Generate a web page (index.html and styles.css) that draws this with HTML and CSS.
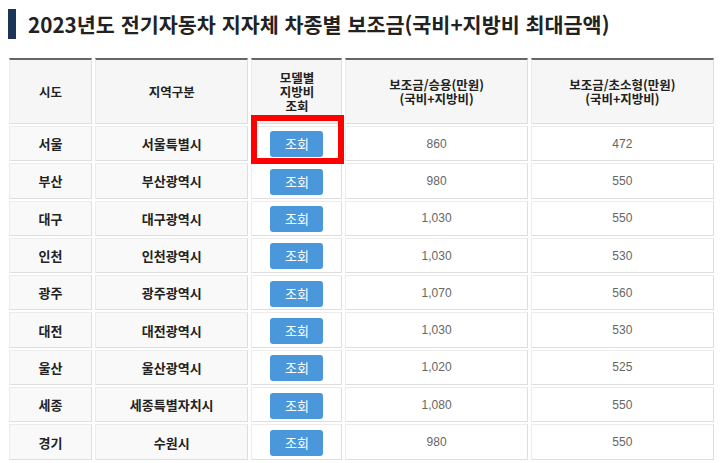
FILE: index.html
```html
<!DOCTYPE html>
<html lang="ko">
<head>
<meta charset="utf-8">
<title>2023년도 전기자동차 지자체 차종별 보조금</title>
<link rel="stylesheet" href="styles.css">
</head>
<body>
<div class="page">
  <h2 class="title"><span class="title-bar"></span><span class="title-text">2023년도 전기자동차 지자체 차종별 보조금(국비+지방비 최대금액)</span></h2>
  <div class="table-wrap">
    <table class="subsidy">
      <colgroup>
        <col class="c-sido">
        <col class="c-region">
        <col class="c-model">
        <col class="c-car">
        <col class="c-small">
      </colgroup>
      <thead>
        <tr>
          <th>시도</th>
          <th>지역구분</th>
          <th>모델별<br>지방비<br>조회</th>
          <th>보조금/승용(만원)<br>(국비+지방비)</th>
          <th>보조금/초소형(만원)<br>(국비+지방비)</th>
        </tr>
      </thead>
      <tbody>
        <tr><td class="name">서울</td><td class="name">서울특별시</td><td class="btn-cell"><button class="btn">조회</button></td><td class="num">860</td><td class="num">472</td></tr>
        <tr><td class="name">부산</td><td class="name">부산광역시</td><td class="btn-cell"><button class="btn">조회</button></td><td class="num">980</td><td class="num">550</td></tr>
        <tr><td class="name">대구</td><td class="name">대구광역시</td><td class="btn-cell"><button class="btn">조회</button></td><td class="num">1,030</td><td class="num">550</td></tr>
        <tr><td class="name">인천</td><td class="name">인천광역시</td><td class="btn-cell"><button class="btn">조회</button></td><td class="num">1,030</td><td class="num">530</td></tr>
        <tr><td class="name">광주</td><td class="name">광주광역시</td><td class="btn-cell"><button class="btn">조회</button></td><td class="num">1,070</td><td class="num">560</td></tr>
        <tr><td class="name">대전</td><td class="name">대전광역시</td><td class="btn-cell"><button class="btn">조회</button></td><td class="num">1,030</td><td class="num">530</td></tr>
        <tr><td class="name">울산</td><td class="name">울산광역시</td><td class="btn-cell"><button class="btn">조회</button></td><td class="num">1,020</td><td class="num">525</td></tr>
        <tr><td class="name">세종</td><td class="name">세종특별자치시</td><td class="btn-cell"><button class="btn">조회</button></td><td class="num">1,080</td><td class="num">550</td></tr>
        <tr><td class="name">경기</td><td class="name">수원시</td><td class="btn-cell"><button class="btn">조회</button></td><td class="num">980</td><td class="num">550</td></tr>
      </tbody>
    </table>
    <div class="highlight"></div>
  </div>
</div>
</body>
</html>
```
FILE: styles.css
```css
html, body {
  margin: 0;
  padding: 0;
  background: #ffffff;
}

body {
  font-family: "Noto Sans CJK KR", "Noto Sans", sans-serif;
  color: #222222;
}

.page {
  width: 720px;
  height: 463px;
  overflow: hidden;
}

.title {
  display: flex;
  align-items: center;
  gap: 12px;
  margin: 9px 0 0 8px;
  height: 30px;
  font-size: 20.7px;
  font-weight: 700;
  color: #222222;
}

.title-bar {
  display: block;
  width: 8px;
  height: 30px;
  background: #1c3455;
  flex: none;
}

.title-text {
  line-height: 30px;
  white-space: nowrap;
}

.table-wrap {
  position: relative;
  margin: 17px 0 0 6px;
  width: 711px;
}

.subsidy {
  border-collapse: separate;
  border-spacing: 3px 2px;
  table-layout: fixed;
  width: 711px;
}

.c-sido { width: 83px; }
.c-region { width: 153px; }
.c-model { width: 91px; }
.c-car { width: 182px; }
.c-small { width: 183px; }

.subsidy th,
.subsidy td {
  box-sizing: border-box;
  padding: 0;
  text-align: center;
  vertical-align: middle;
  border: 1px solid #ececec;
  border-right-color: #dedede;
  border-bottom-color: #dedede;
}

.subsidy th {
  height: 66px;
  background: #f6f6f6;
  border-top: 2px solid #666666;
  font-size: 12.5px;
  font-weight: 700;
  line-height: 14px;
  color: #222222;
}

.subsidy td {
  height: 35.3px;
  background: #ffffff;
}

.subsidy td.name {
  background: #f9f9f9;
  font-size: 13px;
  font-weight: 700;
  color: #222222;
}

.subsidy td.num {
  font-family: "Liberation Sans", Arial, sans-serif;
  font-size: 12px;
  color: #666666;
}

.btn {
  display: inline-block;
  width: 53px;
  height: 26px;
  padding: 0;
  border: none;
  border-radius: 3px;
  background: #4a98db;
  color: #ffffff;
  font-family: "Noto Sans CJK KR", sans-serif;
  font-size: 13px;
  line-height: 26px;
  vertical-align: middle;
}

.highlight {
  position: absolute;
  left: 245px;
  top: 59px;
  width: 93px;
  height: 49px;
  box-sizing: border-box;
  border: 6px solid #ff0000;
  pointer-events: none;
}
```
